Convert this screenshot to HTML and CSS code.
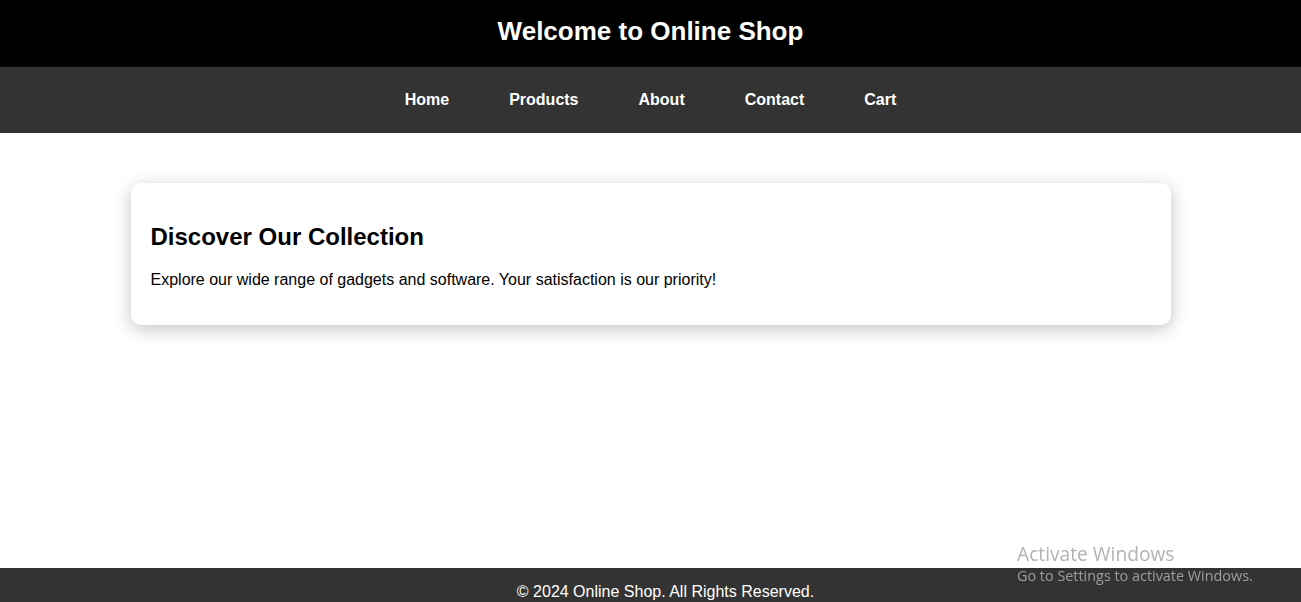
FILE: index.html
```html
<!DOCTYPE html>
<html lang="en">
<head>
<meta charset="utf-8">
<title>Online Shop</title>
<link rel="stylesheet" href="styles.css">
</head>
<body>
<header class="site-header">
  <h1 class="site-title">Welcome to Online Shop</h1>
</header>
<nav class="site-nav">
  <a class="nav-link" href="#">Home</a>
  <a class="nav-link" href="#">Products</a>
  <a class="nav-link" href="#">About</a>
  <a class="nav-link" href="#">Contact</a>
  <a class="nav-link" href="#">Cart</a>
</nav>
<main class="main">
  <section class="card">
    <h2 class="card-title">Discover Our Collection</h2>
    <p class="card-text">Explore our wide range of gadgets and software. Your satisfaction is our priority!</p>
  </section>
</main>
<footer class="site-footer">
  <p class="footer-text">&copy; 2024 Online Shop. All Rights Reserved.</p>
</footer>
<div class="activate">
  <div class="activate-title">Activate Windows</div>
  <div class="activate-sub">Go to Settings to activate Windows.</div>
</div>
</body>
</html>
```

FILE: styles.css
```css
html, body {
  margin: 0;
  padding: 0;
}
body {
  font-family: "Liberation Sans", Arial, sans-serif;
  background: #fff;
  color: #000;
  overflow: hidden;
}
.site-header {
  background: #000;
  color: #fff;
  text-align: center;
  padding: 16px 0 20px;
}
.site-title {
  margin: 0;
  font-size: 26px;
  line-height: 31px;
  font-weight: bold;
}
.site-nav {
  background: #333;
  height: 66px;
  display: flex;
  justify-content: center;
  align-items: center;
  gap: 60px;
}
.nav-link {
  color: #fff;
  text-decoration: none;
  font-weight: bold;
  font-size: 16px;
}
.main {
  min-height: 435px;
  box-sizing: border-box;
  padding-top: 50px;
}
.card {
  max-width: 1000px;
  margin: 0 auto;
  padding: 20px;
  background: #fff;
  border-radius: 10px;
  box-shadow: 0 4px 18px rgba(0, 0, 0, 0.24);
}
.card-title {
  margin: 20px 0;
  font-size: 24px;
  line-height: 28px;
}
.card-text {
  margin: 16px 0;
  font-size: 16px;
  line-height: 18px;
}
.site-footer {
  background: #333;
  color: #fff;
  text-align: center;
  width: 100%;
  padding: 15px;
}
.footer-text {
  margin: 0;
  font-size: 16px;
  line-height: 18px;
}
.activate {
  position: fixed;
  left: 1017px;
  top: 541px;
  font-family: "Open Sans", "Noto Sans", sans-serif;
  color: rgba(170, 170, 170, 0.9);
  pointer-events: none;
}
.activate-title {
  font-size: 19.2px;
  line-height: 25px;
}
.activate-sub {
  font-size: 14.4px;
  line-height: 20px;
}
```
